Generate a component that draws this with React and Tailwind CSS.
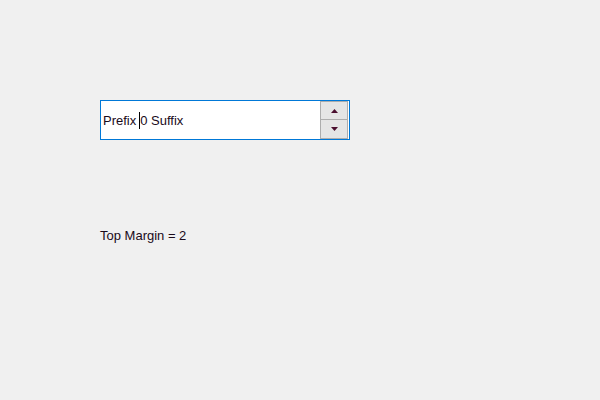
export default function App() {
  return (
    <div className="w-[600px] h-[400px] bg-[#f0f0f0] relative" style={{ fontFamily: '"Liberation Sans", Arial, sans-serif' }}>
      <div className="absolute left-[100px] top-[100px] w-[250px] h-[40px] border border-[#0078d7] bg-white flex items-center">
        <div className="flex-1 pl-[2px] text-[13px] text-[#1a0a1a] flex items-center leading-none">
          <span>Prefix</span>
          <span className="w-[3px]"></span>
          <span className="w-px h-[17px] bg-black"></span>
          <span>0 Suffix</span>
        </div>
        <div className="w-[28px] h-[38px] mr-[1px] flex flex-col">
          <div className="h-[19px] border border-[#adadad] bg-[#e5e5e5] flex items-center justify-center">
            <svg width="7" height="4" viewBox="0 0 7 4"><polygon points="3.5,0 7,4 0,4" fill="#4a0e2e" /></svg>
          </div>
          <div className="h-[19px] border border-t-0 border-[#adadad] bg-[#e5e5e5] flex items-center justify-center">
            <svg width="7" height="4" viewBox="0 0 7 4"><polygon points="0,0 7,0 3.5,4" fill="#4a0e2e" /></svg>
          </div>
        </div>
      </div>
      <div className="absolute left-[100px] top-[228px] text-[13px] text-[#1a0a1a] leading-[16px]">Top Margin = 2</div>
    </div>
  );
}
